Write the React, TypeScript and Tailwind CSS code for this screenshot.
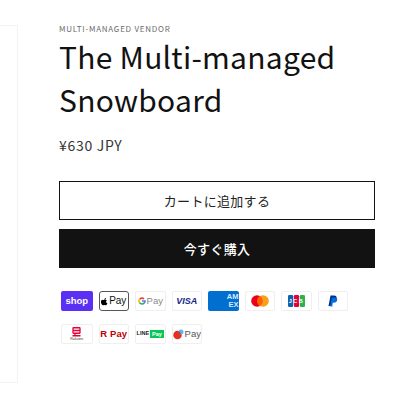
const FONT = "font-['Noto_Sans_CJK_JP','Noto_Sans',sans-serif]";

const Badge = ({ children, wide, className }: { children?: React.ReactNode; wide?: boolean; className?: string }) => (
  <div className={`${wide ? "w-[31.500px]" : "w-[30.500px]"} h-[20px] shrink-0 rounded-[2px] overflow-hidden flex items-center justify-center whitespace-nowrap font-['Liberation_Sans',sans-serif] ${className ?? "border border-[#efefef] bg-white"}`}>
    {children}
  </div>
);

const icons = [
  <Badge wide key="shop" className="bg-[#5a31f4]">
    <span className="text-white text-[9.500px] font-bold leading-none">shop</span>
  </Badge>,
  <Badge key="apple" className="border border-[#555] bg-white rounded-[3px]">
    <svg width="7" height="9" viewBox="0 0 24 28" className="mr-[1px]" fill="#000">
      <path d="M17 2c.2 2-.6 3.500-1.500 4.600-1 1.200-2.500 2-4 1.900-.2-1.800.7-3.500 1.500-4.500C14 2.800 15.700 2.100 17 2zM22 20c-.6 1.400-.9 2-1.700 3.300-1.100 1.700-2.600 3.800-4.500 3.800-1.700 0-2.100-1.100-4.400-1.100-2.300 0-2.800 1.100-4.500 1.100-1.900 0-3.300-1.900-4.400-3.600C-.6 19 -.9 13.600.9 10.800 2.200 8.800 4.200 7.700 6.100 7.700c1.900 0 3.100 1.100 4.700 1.100 1.500 0 2.500-1.100 4.700-1.100 1.700 0 3.500.9 4.700 2.500-4.100 2.300-3.500 8.100 1.800 9.800z" />
    </svg>
    <span className="text-[10px] leading-none text-[#111]">Pay</span>
  </Badge>,
  <Badge key="gpay">
    <svg width="8" height="8" viewBox="0 0 24 24" className="mr-[1px]" fill="none" strokeWidth="5">
      <path d="M5 6.500A9 9 0 0 1 18 5.400" stroke="#ea4335" />
      <path d="M5 17.500a9 9 0 0 1 0-11" stroke="#fbbc04" />
      <path d="M19 18a9 9 0 0 1-14-.5" stroke="#34a853" />
      <path d="M12 12h9a9 9 0 0 1-2 6" stroke="#4285f4" />
    </svg>
    <span className="text-[9.500px] leading-none text-[#8a8a8a]">Pay</span>
  </Badge>,
  <Badge key="visa">
    <span className="text-[9px] font-bold italic leading-none text-[#142688]">VISA</span>
  </Badge>,
  <Badge key="amex" className="bg-[#006fcf] rounded-[1px] relative">
    <div className="absolute right-[0px] top-[2px] flex flex-col items-end text-[#d8eaff] text-[7.500px] font-bold leading-[8px]">
      <span>AM</span>
      <span>EX</span>
    </div>
  </Badge>,
  <Badge key="mc">
    <svg width="18" height="12" viewBox="0 0 18 12">
      <circle cx="6" cy="6" r="5.800" fill="#eb001b" />
      <circle cx="12" cy="6" r="5.800" fill="#f79e1b" />
      <path d="M9 1.100a5.800 5.800 0 0 1 0 9.800a5.800 5.800 0 0 1 0-9.800z" fill="#ff5f00" />
    </svg>
  </Badge>,
  <Badge key="jcb">
    <svg width="17" height="12" viewBox="0 0 17 12">
      <rect x="0" width="5.200" height="12" rx="1.200" fill="#0e62b5" />
      <rect x="5.900" width="5.200" height="12" rx="1.200" fill="#e4003a" />
      <rect x="11.800" width="5.200" height="12" rx="1.200" fill="#2bb24c" />
      <text x="8.500" y="8.200" textAnchor="middle" fontSize="5.500" fontWeight="700" fill="#fff" letterSpacing="1.500">JCB</text>
    </svg>
  </Badge>,
  <Badge key="paypal">
    <svg width="10" height="12" viewBox="0 0 20 24">
      <path d="M5 1h7c4 0 6 2 5 6-1 4-4 6-8 6H7l-1.500 9H1z" fill="#003087" />
      <path d="M8 5h6c3 0 5 1.500 4.400 5-.7 4-3.400 5.500-7 5.500H9.500L8.500 23H4.500z" fill="#0070e0" />
    </svg>
  </Badge>,
  <Badge wide key="rakuten-edy">
    <div className="flex flex-col items-center">
      <svg width="9" height="10" viewBox="0 0 18 20" fill="none" stroke="#e60033" strokeWidth="2.600">
        <rect x="2" y="1.500" width="14" height="11" rx="1" />
        <path d="M2 7h14M1 17.500h16M6 12.500v5" />
      </svg>
      <span className="text-[3.500px] leading-[4px] text-[#333]">Rakuten</span>
    </div>
  </Badge>,
  <Badge key="rpay">
    <span className="text-[9.500px] font-bold leading-none text-[#bf0000] tracking-[0.1px]">R Pay</span>
  </Badge>,
  <Badge key="line">
    <span className="text-[5.500px] font-bold leading-none text-[#222]">LINE</span>
    <span className="ml-[1px] bg-[#06c755] text-white text-[5.500px] font-bold leading-[8px] px-[2px]">Pay</span>
  </Badge>,
  <Badge key="merpay">
    <svg width="11" height="11" viewBox="0 0 22 22" className="mr-[1px]">
      <circle cx="9" cy="12" r="8.500" fill="#e5301f" />
      <circle cx="16" cy="6" r="5" fill="#5bb7e8" />
      <path d="M11.500 4.200a5 5 0 0 0 4 6.800 8.500 8.500 0 0 0-4-6.800z" fill="#a33" />
    </svg>
    <span className="text-[9.500px] leading-none text-[#555]">Pay</span>
  </Badge>,
];

export default function App() {
  return (
    <div className={`w-[416px] h-[416px] bg-white overflow-hidden flex items-start ${FONT}`}>
      <div className="w-[18px] h-[358px] mt-[25px] shrink-0 border border-l-0 border-[#f3f3f3]" />
      <div className="w-[316px] ml-[41px] mt-[23px] flex flex-col">
        <p className="text-[8px] leading-[12px] tracking-[0.75px] text-[#6b6b6b]">MULTI-MANAGED VENDOR</p>
        <h1 className="text-[30px] leading-[43px] font-normal tracking-[0.25px] text-[#121212]">
          The Multi-managed
          <br />
          Snowboard
        </h1>
        <p className="text-[14px] leading-[20px] tracking-[0.7px] text-[#333] mt-[14px]">¥630 JPY</p>
        <button className="mt-[26px] h-[39px] border border-[#121212] bg-white text-[13px] tracking-[0.3px] text-[#222] flex items-center justify-center">
          カートに追加する
        </button>
        <button className="mt-[9px] h-[39px] bg-[#121212] text-white text-[13px] font-medium tracking-[0.3px] flex items-center justify-center">
          今すぐ購入
        </button>
        <div className="mt-[23px] ml-[2px] flex flex-wrap gap-x-[6px] gap-y-[13px] w-[300px]">
          {icons}
        </div>
      </div>
    </div>
  );
}
